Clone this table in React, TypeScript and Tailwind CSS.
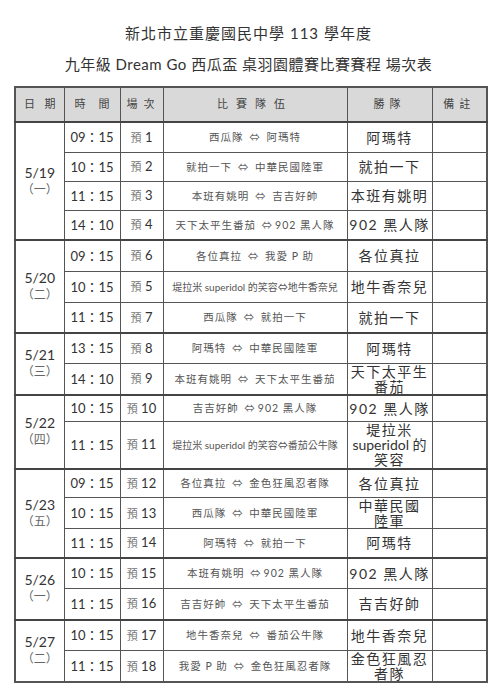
import React from "react";

type Row = { time: string; no: string; match: React.ReactNode; win: React.ReactNode; h: number };
type Group = { date: string; day: string; rows: Row[] };

const A = () => <span className="mx-[2px] text-[#666]">⇔</span>;

const groups: Group[] = [
  {
    date: "5/19", day: "一",
    rows: [
      { time: "09：15", no: "1", match: <>西瓜隊 <A /> 阿瑪特</>, win: "阿瑪特", h: 30 },
      { time: "10：15", no: "2", match: <>就拍一下 <A /> 中華民國陸軍</>, win: "就拍一下", h: 29 },
      { time: "11：15", no: "3", match: <>本班有姚明 <A /> 吉吉好帥</>, win: "本班有姚明", h: 29 },
      { time: "14：10", no: "4", match: <>天下太平生番茄 <A />902 黑人隊</>, win: "902 黑人隊", h: 30 },
    ],
  },
  {
    date: "5/20", day: "二",
    rows: [
      { time: "09：15", no: "6", match: <>各位真拉 <A /> 我愛 P 助</>, win: "各位真拉", h: 31 },
      { time: "10：15", no: "5", match: <span className="tracking-[0px] text-[10px]">堤拉米 superidol 的笑容⇔地牛香奈兒</span>, win: "地牛香奈兒", h: 31 },
      { time: "11：15", no: "7", match: <>西瓜隊 <A /> 就拍一下</>, win: "就拍一下", h: 31 },
    ],
  },
  {
    date: "5/21", day: "三",
    rows: [
      { time: "13：15", no: "8", match: <>阿瑪特 <A /> 中華民國陸軍</>, win: "阿瑪特", h: 30 },
      { time: "14：10", no: "9", match: <>本班有姚明 <A /> 天下太平生番茄</>, win: <>天下太平生<br />番茄</>, h: 30 },
    ],
  },
  {
    date: "5/22", day: "四",
    rows: [
      { time: "10：15", no: "10", match: <>吉吉好帥 <A />902 黑人隊</>, win: "902 黑人隊", h: 27 },
      { time: "11：15", no: "11", match: <span className="tracking-[0px] text-[10px]">堤拉米 superidol 的笑容⇔番茄公牛隊</span>, win: <>堤拉米<br /><span className="tracking-[0px]">superidol 的</span><br />笑容</>, h: 47 },
    ],
  },
  {
    date: "5/23", day: "五",
    rows: [
      { time: "09：15", no: "12", match: <>各位真拉 <A /> 金色狂風忍者隊</>, win: "各位真拉", h: 29 },
      { time: "10：15", no: "13", match: <>西瓜隊 <A /> 中華民國陸軍</>, win: <>中華民國<br />陸軍</>, h: 30 },
      { time: "11：15", no: "14", match: <>阿瑪特 <A /> 就拍一下</>, win: "阿瑪特", h: 29 },
    ],
  },
  {
    date: "5/26", day: "一",
    rows: [
      { time: "10：15", no: "15", match: <>本班有姚明 <A />902 黑人隊</>, win: "902 黑人隊", h: 31 },
      { time: "11：15", no: "16", match: <>吉吉好帥 <A /> 天下太平生番茄</>, win: "吉吉好帥", h: 31 },
    ],
  },
  {
    date: "5/27", day: "二",
    rows: [
      { time: "10：15", no: "17", match: <>地牛香奈兒 <A /> 番茄公牛隊</>, win: "地牛香奈兒", h: 31 },
      { time: "11：15", no: "18", match: <>我愛 P 助 <A /> 金色狂風忍者隊</>, win: <>金色狂風忍<br />者隊</>, h: 31 },
    ],
  },
];

const font = "font-['Lato','Noto_Sans_CJK_TC',sans-serif]";
const cell = "border border-[#555] p-0 text-center align-middle";

export default function App() {
  return (
    <div className={`w-[497px] h-[700px] bg-white ${font} text-[#222]`}>
      <div className="pt-[22px] text-center text-[15px] leading-[22px] tracking-[1px] text-[#333]">
        新北市立重慶國民中學 113 學年度
      </div>
      <div className="mt-[8px] text-center text-[15px] leading-[24px] tracking-[0.5px] text-[#333]">
        九年級 Dream Go 西瓜盃 桌羽園體賽比賽賽程 場次表
      </div>
      <table className="ml-[14px] mt-[10px] w-[472px] table-fixed border-collapse border-2 border-[#555]">
        <colgroup>
          <col className="w-[49px]" />
          <col className="w-[56px]" />
          <col className="w-[43px]" />
          <col className="w-[184px]" />
          <col className="w-[85px]" />
          <col className="w-[55px]" />
        </colgroup>
        <thead>
          <tr className="h-[35px] bg-[#d9d9d9] text-[11px] text-[#444]">
            <th className={`${cell} font-normal`}><span className="flex justify-between px-[8px]"><span>日</span><span>期</span></span></th>
            <th className={`${cell} font-normal`}><span className="flex justify-between px-[10px]"><span>時</span><span>間</span></span></th>
            <th className={`${cell} font-normal text-left pl-[6px] tracking-[6px]`}>場次</th>
            <th className={`${cell} font-normal tracking-[8px]`}>比賽隊伍</th>
            <th className={`${cell} font-normal tracking-[5px]`}>勝隊</th>
            <th className={`${cell} font-normal tracking-[5px]`}>備註</th>
          </tr>
        </thead>
        <tbody>
          {groups.map((g) =>
            g.rows.map((r, i) => (
              <tr key={g.date + i} className={i === 0 ? "border-t-2 border-[#444]" : ""} style={{ height: r.h }}>
                {i === 0 && (
                  <td rowSpan={g.rows.length} className={cell}>
                    <div className="text-[14px] leading-[16px] text-[#333]">{g.date}</div>
                    <div className="text-[12px] leading-[17px] text-[#666]">（{g.day}）</div>
                  </td>
                )}
                <td className={`${cell} text-[13px] leading-[16px] text-[#333]`}>{r.time}</td>
                <td className={`${cell} text-[13px] leading-[16px] text-[#333]`}>
                  <span className="text-[11px] text-[#777]">預</span> {r.no}
                </td>
                <td className={`${cell} text-[10.5px] leading-[14px] tracking-[1px] text-[#555] whitespace-nowrap overflow-hidden`}>{r.match}</td>
                <td className={`${cell} text-[14px] leading-[15px] tracking-[1.5px] text-[#333]`}>{r.win}</td>
                <td className={cell}></td>
              </tr>
            ))
          )}
        </tbody>
      </table>
    </div>
  );
}
